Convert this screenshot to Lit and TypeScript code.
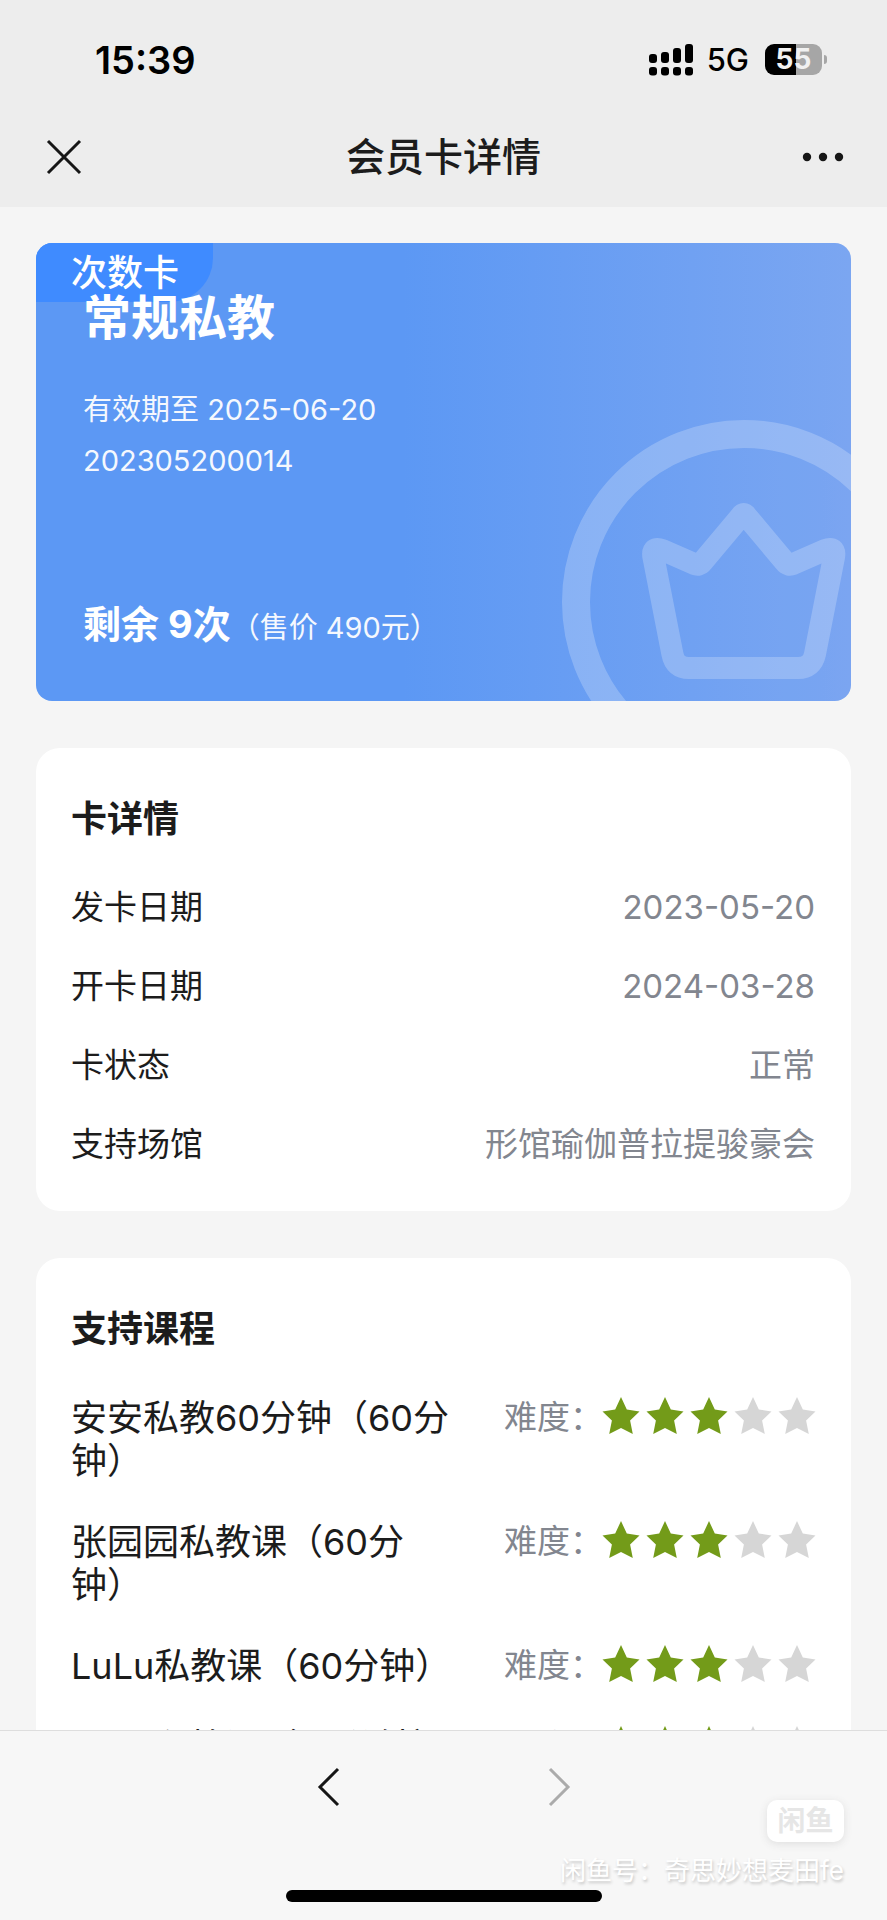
import { LitElement, html, css, svg } from "lit";
import { customElement, property } from "lit/decorators.js";

interface Detail {
  label: string;
  value: string;
}

interface Course {
  name: string;
  level: number;
}

const DETAILS: Detail[] = [
  { label: "发卡日期", value: "2023-05-20" },
  { label: "开卡日期", value: "2024-03-28" },
  { label: "卡状态", value: "正常" },
  { label: "支持场馆", value: "形馆瑜伽普拉提骏豪会" },
];

const COURSES: Course[] = [
  { name: "安安私教60分钟（60分钟）", level: 3 },
  { name: "张园园私教课（60分钟）", level: 3 },
  { name: "LuLu私教课（60分钟）", level: 3 },
  { name: "Lucy私教课（60分钟）", level: 3 },
];

@customElement("star-rating")
export class StarRating extends LitElement {
  @property({ type: Number }) value = 0;

  static styles = css`
    :host {
      display: flex;
      gap: 8px;
    }
    .star {
      display: block;
      width: 36px;
      height: 37px;
      overflow: visible;
      fill: #d6d6d6;
    }
    .on {
      fill: #739b19;
    }
  `;

  render() {
    return [1, 2, 3, 4, 5].map(
      (n) => html`<svg class="star ${n <= this.value ? "on" : ""}" viewBox="0.5 0 36 37" aria-hidden="true">
        <path d="M18.5 0 L24.3 12.6 L37 14.4 L27.6 23.6 L30.3 37 L18.5 31 L6.7 37 L9.4 23.6 L0 14.4 L12.7 12.6Z" />
      </svg>`
    );
  }
}

@customElement("status-bar")
export class StatusBar extends LitElement {
  static styles = css`
    :host {
      display: flex;
      align-items: center;
      justify-content: space-between;
      height: 95px;
      padding: 12px 60px 0 95px;
      color: #000;
    }
    .time {
      font-size: 38px;
      font-weight: 600;
    }
    .right {
      display: flex;
      align-items: center;
    }
    .signal {
      width: 44px;
      height: 32px;
    }
    .network {
      margin: 0 16px 0 14px;
      font-size: 31px;
      font-weight: 500;
    }
    .battery {
      width: 57px;
      height: 31px;
      border-radius: 9px;
      background: linear-gradient(90deg, #000 55%, #a6a6a6 55%);
      color: #f1f1f1;
      font-size: 28px;
      font-weight: 700;
      line-height: 31px;
      text-align: center;
    }
    .nub {
      width: 3px;
      height: 9px;
      margin-left: 2px;
      border-radius: 0 4px 4px 0;
      background: #a6a6a6;
    }
  `;

  render() {
    const tops = [10, 8, 4, 0];
    return html`
      <span class="time">15:39</span>
      <div class="right">
        <svg class="signal" viewBox="0 0 44 32" aria-hidden="true">
          ${tops.map(
            (top, i) => svg`
              <rect x=${i * 12} y=${top} width="8" height=${19 - top} rx="3" />
              <rect x=${i * 12} y="23" width="8" height="8.6" rx="3" />`
          )}
        </svg>
        <span class="network">5G</span>
        <span class="battery">55</span>
        <span class="nub"></span>
      </div>
    `;
  }
}

@customElement("member-card")
export class MemberCard extends LitElement {
  static styles = css`
    :host {
      display: block;
      position: relative;
      overflow: hidden;
      padding: 47px 47px 54px;
      border-radius: 16px;
      background: linear-gradient(90deg, #5c98f4 45%, #7ba6f1);
      color: #fff;
    }
    .kind {
      position: absolute;
      top: 0;
      left: 0;
      width: 177px;
      box-sizing: border-box;
      padding: 2px 0 0 35px;
      border-bottom-right-radius: 44px;
      background: #3f8bff;
      font-size: 36px;
      font-weight: 500;
      line-height: 57px;
    }
    .name {
      position: relative;
      margin: 0 0 38px;
      font-size: 48px;
      font-weight: 700;
      line-height: 56px;
    }
    .meta {
      margin: 0;
      font-size: 29px;
      line-height: 51px;
      opacity: 0.94;
    }
    .left {
      display: flex;
      align-items: baseline;
      margin: 115px 0 0;
      font-size: 38px;
      font-weight: 700;
      line-height: 46px;
    }
    .price {
      font-size: 29px;
      font-weight: 400;
      line-height: 36px;
      opacity: 0.94;
    }
    .crown {
      position: absolute;
      right: -75px;
      bottom: -83px;
      width: 364px;
      height: 364px;
      fill: none;
      stroke: #fff;
      opacity: 0.22;
    }
  `;

  render() {
    return html`
      <svg class="crown" viewBox="0 0 364 364" aria-hidden="true">
        <circle cx="182" cy="182" r="168" stroke-width="28" />
        <path
          stroke-width="22"
          stroke-linejoin="round"
          d="M179 96 Q181.7 92 184.4 96 L223 142 Q226 146 231 144 L263 130 Q274 126 272 137 L253 234 Q250 248 236 248 H127 Q113 248 110.4 234 L91.4 137 Q89.4 126 100.4 130 L132.4 144 Q137.4 146 140.4 142Z"
        />
      </svg>
      <span class="kind">次数卡</span>
      <h1 class="name">常规私教</h1>
      <p class="meta">有效期至 2025-06-20</p>
      <p class="meta">202305200014</p>
      <p class="left">剩余 9次<span class="price">（售价 490元）</span></p>
    `;
  }
}

@customElement("app-root")
export class AppRoot extends LitElement {
  static styles = css`
    :host {
      display: flex;
      flex-direction: column;
      height: 100vh;
      background: #f5f5f5;
      color: #1c1c1c;
      font-family: Inter, "Noto Sans CJK SC", sans-serif;
    }
    .top {
      background: #ededed;
    }
    .nav {
      display: flex;
      align-items: center;
      justify-content: space-between;
      height: 100px;
      padding: 0 40px;
    }
    .title {
      font-size: 39px;
      font-weight: 500;
      line-height: 48px;
    }
    .icon-button {
      display: grid;
      place-items: center;
      width: 48px;
      height: 48px;
      padding: 0;
      border: 0;
      background: none;
      color: #161616;
    }
    .icon {
      display: block;
      width: 48px;
      height: 48px;
      fill: none;
      stroke: currentColor;
      stroke-width: 3;
    }
    .dots {
      fill: currentColor;
      stroke: none;
    }
    .content {
      flex: 1;
      min-height: 0;
      overflow-y: auto;
      scrollbar-width: none;
      padding: 36px 36px 0;
    }
    .panel {
      margin-top: 47px;
      padding: 46px 36px 47px 35px;
      border-radius: 24px;
      background: #fff;
    }
    .heading {
      margin: 0;
      font-size: 36px;
      font-weight: 700;
      line-height: 50px;
    }
    .details,
    .courses {
      display: flex;
      flex-direction: column;
      margin: 0;
      padding: 0;
      list-style: none;
    }
    .details {
      gap: 39px;
      margin-top: 43px;
      font-size: 33px;
      line-height: 40px;
    }
    .detail {
      display: flex;
      justify-content: space-between;
    }
    .value,
    .level {
      margin: 0;
      color: #82868f;
    }
    .courses {
      gap: 38px;
      margin-top: 43px;
      font-size: 36px;
      line-height: 43px;
    }
    .course {
      display: flex;
      align-items: flex-start;
      gap: 50px;
    }
    .course-name {
      flex: 1;
    }
    .level {
      display: flex;
      align-items: flex-start;
      font-size: 33px;
      line-height: 40px;
    }
    .toolbar {
      position: relative;
      display: flex;
      flex-direction: column;
      align-items: center;
      justify-content: space-between;
      box-sizing: border-box;
      height: 190px;
      padding: 32px 0 18px;
      border-top: 1px solid #dedede;
      background: #f7f7f7;
    }
    .history {
      display: flex;
      gap: 182px;
    }
    .icon-button:disabled {
      color: #ababab;
    }
    .home {
      width: 316px;
      height: 12px;
      border-radius: 6px;
      background: #000;
    }
    .mark {
      position: absolute;
      right: 43px;
      bottom: 32px;
      display: flex;
      flex-direction: column;
      align-items: flex-end;
      gap: 12px;
      color: #fff;
      font-size: 26px;
      line-height: 34px;
      text-shadow: 1px 2px 3px #c4c4c4;
    }
    .brand {
      width: 77px;
      border-radius: 10px;
      background: #fff;
      box-shadow: 0 2px 8px #dfdfdf;
      color: #e6e6e6;
      font-size: 28px;
      font-weight: 700;
      line-height: 42px;
      text-align: center;
      text-shadow: none;
    }
  `;

  render() {
    return html`
      <header class="top">
        <status-bar></status-bar>
        <nav class="nav">
          <button class="icon-button" aria-label="关闭">
            <svg class="icon" viewBox="0 0 48 48"><path d="M8 8 L40 40 M40 8 L8 40" /></svg>
          </button>
          <span class="title">会员卡详情</span>
          <button class="icon-button" aria-label="更多">
            <svg class="icon dots" viewBox="0 0 48 48">
              <circle cx="8" cy="24" r="4.2" />
              <circle cx="24" cy="24" r="4.2" />
              <circle cx="40" cy="24" r="4.2" />
            </svg>
          </button>
        </nav>
      </header>

      <main class="content">
        <member-card></member-card>

        <section class="panel">
          <h2 class="heading">卡详情</h2>
          <dl class="details">
            ${DETAILS.map(
              (d) => html`<div class="detail">
                <dt>${d.label}</dt>
                <dd class="value">${d.value}</dd>
              </div>`
            )}
          </dl>
        </section>

        <section class="panel">
          <h2 class="heading">支持课程</h2>
          <ul class="courses">
            ${COURSES.map(
              (c) => html`<li class="course">
                <span class="course-name">${c.name}</span>
                <span class="level">难度：<star-rating .value=${c.level}></star-rating></span>
              </li>`
            )}
          </ul>
        </section>
      </main>

      <footer class="toolbar">
        <div class="history">
          <button class="icon-button" aria-label="后退">
            <svg class="icon" viewBox="0 0 48 48"><path d="M33 6 L15 24 L33 42" /></svg>
          </button>
          <button class="icon-button" aria-label="前进" disabled>
            <svg class="icon" viewBox="0 0 48 48"><path d="M15 6 L33 24 L15 42" /></svg>
          </button>
        </div>
        <div class="home"></div>
        <div class="mark">
          <span class="brand">闲鱼</span>
          <span>闲鱼号：奇思妙想麦田fe</span>
        </div>
      </footer>
    `;
  }
}
